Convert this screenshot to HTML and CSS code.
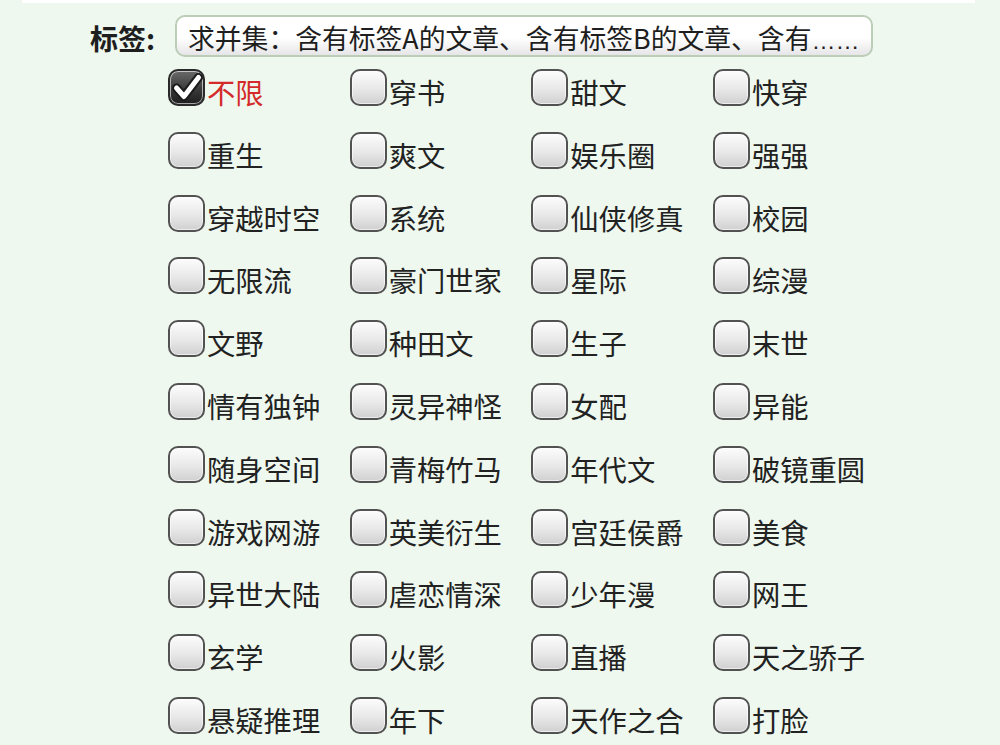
FILE: index.html
```html
<!DOCTYPE html>
<html lang="zh">
<head>
<meta charset="utf-8">
<link rel="stylesheet" href="styles.css">
</head>
<body>
<div class="topband"></div>
<div class="page">
  <div class="header">
    <span class="label">标签:</span>
    <div class="desc">求并集：含有标签A的文章、含有标签B的文章、含有<span class="ell">……</span></div>
  </div>
  <div class="grid">
    <label class="item checked"><span class="box"><svg viewBox="0 0 36 36" width="36" height="36"><path d="M7.5 18 L15 26.5 L29.5 7.5" fill="none" stroke="#1a1a1a" stroke-width="9" stroke-linecap="round" stroke-linejoin="round"/><path d="M7.5 18 L15 26.5 L29.5 7.5" fill="none" stroke="#fff" stroke-width="5" stroke-linecap="round" stroke-linejoin="round"/></svg></span><span class="txt red">不限</span></label>
    <label class="item"><span class="box"></span><span class="txt">穿书</span></label>
    <label class="item"><span class="box"></span><span class="txt">甜文</span></label>
    <label class="item"><span class="box"></span><span class="txt">快穿</span></label>

    <label class="item"><span class="box"></span><span class="txt">重生</span></label>
    <label class="item"><span class="box"></span><span class="txt">爽文</span></label>
    <label class="item"><span class="box"></span><span class="txt">娱乐圈</span></label>
    <label class="item"><span class="box"></span><span class="txt">强强</span></label>

    <label class="item"><span class="box"></span><span class="txt">穿越时空</span></label>
    <label class="item"><span class="box"></span><span class="txt">系统</span></label>
    <label class="item"><span class="box"></span><span class="txt">仙侠修真</span></label>
    <label class="item"><span class="box"></span><span class="txt">校园</span></label>

    <label class="item"><span class="box"></span><span class="txt">无限流</span></label>
    <label class="item"><span class="box"></span><span class="txt">豪门世家</span></label>
    <label class="item"><span class="box"></span><span class="txt">星际</span></label>
    <label class="item"><span class="box"></span><span class="txt">综漫</span></label>

    <label class="item"><span class="box"></span><span class="txt">文野</span></label>
    <label class="item"><span class="box"></span><span class="txt">种田文</span></label>
    <label class="item"><span class="box"></span><span class="txt">生子</span></label>
    <label class="item"><span class="box"></span><span class="txt">末世</span></label>

    <label class="item"><span class="box"></span><span class="txt">情有独钟</span></label>
    <label class="item"><span class="box"></span><span class="txt">灵异神怪</span></label>
    <label class="item"><span class="box"></span><span class="txt">女配</span></label>
    <label class="item"><span class="box"></span><span class="txt">异能</span></label>

    <label class="item"><span class="box"></span><span class="txt">随身空间</span></label>
    <label class="item"><span class="box"></span><span class="txt">青梅竹马</span></label>
    <label class="item"><span class="box"></span><span class="txt">年代文</span></label>
    <label class="item"><span class="box"></span><span class="txt">破镜重圆</span></label>

    <label class="item"><span class="box"></span><span class="txt">游戏网游</span></label>
    <label class="item"><span class="box"></span><span class="txt">英美衍生</span></label>
    <label class="item"><span class="box"></span><span class="txt">宫廷侯爵</span></label>
    <label class="item"><span class="box"></span><span class="txt">美食</span></label>

    <label class="item"><span class="box"></span><span class="txt">异世大陆</span></label>
    <label class="item"><span class="box"></span><span class="txt">虐恋情深</span></label>
    <label class="item"><span class="box"></span><span class="txt">少年漫</span></label>
    <label class="item"><span class="box"></span><span class="txt">网王</span></label>

    <label class="item"><span class="box"></span><span class="txt">玄学</span></label>
    <label class="item"><span class="box"></span><span class="txt">火影</span></label>
    <label class="item"><span class="box"></span><span class="txt">直播</span></label>
    <label class="item"><span class="box"></span><span class="txt">天之骄子</span></label>

    <label class="item"><span class="box"></span><span class="txt">悬疑推理</span></label>
    <label class="item"><span class="box"></span><span class="txt">年下</span></label>
    <label class="item"><span class="box"></span><span class="txt">天作之合</span></label>
    <label class="item"><span class="box"></span><span class="txt">打脸</span></label>
  </div>
</div>
</body>
</html>
```

FILE: styles.css
```css
html, body {
  margin: 0;
  padding: 0;
  background: #eef8ee;
  width: 1000px;
  height: 745px;
  overflow: hidden;
  font-family: "Noto Sans CJK SC", "Noto Sans", sans-serif;
  color: #222;
}

.topband {
  height: 3px;
  margin: 0 25px 0 22px;
  background: #ffffff;
}

.page {
  padding: 12px 0 0 90px;
}

.header {
  display: flex;
  align-items: center;
  height: 42px;
}

.label {
  font-size: 28px;
  font-weight: bold;
  width: 85px;
  line-height: 42px;
  padding-top: 3px;
  color: #1e1e1e;
}

.desc {
  box-sizing: border-box;
  width: 698px;
  height: 42px;
  border: 2px solid #bccdb8;
  border-radius: 10px;
  background: linear-gradient(#ffffff 0%, #ffffff 55%, #e6e6e8 100%);
  font-size: 26.8px;
  line-height: 38px;
  padding: 2px 0 0 11px;
  white-space: nowrap;
  overflow: hidden;
  color: #1e1e1e;
}

.ell {
  font-family: "Liberation Sans", sans-serif;
  font-size: 24px;
}

.grid {
  display: grid;
  grid-template-columns: repeat(4, 181.67px);
  grid-auto-rows: 37px;
  row-gap: 25.8px;
  margin: 12px 0 0 78px;
}

.item {
  display: flex;
  align-items: flex-start;
  height: 37px;
}

.box {
  box-sizing: border-box;
  width: 37px;
  height: 37px;
  flex: none;
  border: 2.5px solid #525252;
  border-radius: 10px;
  background: linear-gradient(#fcfcfc 0%, #e8e8e8 55%, #d0d0d0 100%);
  box-shadow: inset 0 0 0 1px rgba(255,255,255,0.6);
  position: relative;
}

.checked .box {
  background: linear-gradient(#6a6a6a 0%, #3a3a3a 55%, #1e1e1e 100%);
  border-color: #2a2a2a;
}

.checked .box svg {
  position: absolute;
  left: -1px;
  top: -1px;
}

.txt {
  font-size: 28.3px;
  line-height: 37px;
  margin: 4px 0 0 2px;
  white-space: nowrap;
  color: #222;
}

.txt.red {
  color: #d42a2a;
}
```
